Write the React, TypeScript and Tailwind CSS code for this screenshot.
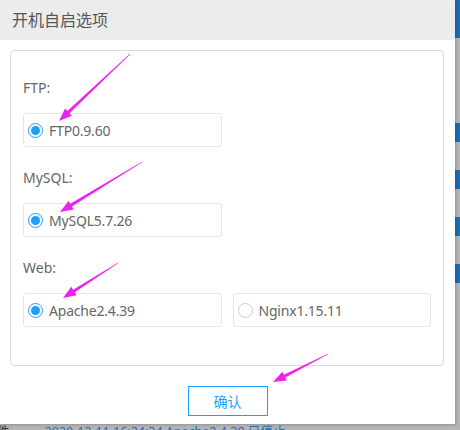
import { useState } from "react";

type Pt = [number, number];

// magenta annotation arrow, thin at the tail and widening into a head
function arrowPoints(tail: Pt, tip: Pt) {
  const dx = tip[0] - tail[0];
  const dy = tip[1] - tail[1];
  const len = Math.hypot(dx, dy);
  const ux = dx / len;
  const uy = dy / len;
  const nx = -uy;
  const ny = ux;
  const head = 13;
  const bx = tip[0] - ux * head;
  const by = tip[1] - uy * head;
  const pts: Pt[] = [
    [tail[0] + nx * 0.3, tail[1] + ny * 0.3],
    [bx + nx * 1.6, by + ny * 1.6],
    [bx + nx * 5, by + ny * 5],
    tip,
    [bx - nx * 5, by - ny * 5],
    [bx - nx * 1.6, by - ny * 1.6],
    [tail[0] - nx * 0.3, tail[1] - ny * 0.3],
  ];
  return pts.map((p) => p.join(",")).join(" ");
}

const arrows: [Pt, Pt][] = [
  [[130, 54], [59, 121]],
  [[142, 162], [60, 212]],
  [[118, 263], [63, 298]],
  [[328, 354], [273, 382]],
];

function Radio({ label, checked, onClick }: { label: string; checked: boolean; onClick: () => void }) {
  return (
    <button
      onClick={onClick}
      className="flex items-center w-[199px] h-[34px] border border-[#e6e6e6] rounded-[3px] pl-[4px] text-left bg-white"
    >
      <span
        className={
          checked
            ? "flex items-center justify-center w-[15px] h-[15px] rounded-full border border-[#1e9fff]"
            : "flex items-center justify-center w-[15px] h-[15px] rounded-full border border-[#c9c9c9]"
        }
      >
        {checked && <span className="w-[9px] h-[9px] rounded-full bg-[#1e9fff]" />}
      </span>
      <span className="ml-[6px] text-[14px] tracking-[-0.2px] text-[#666]">{label}</span>
    </button>
  );
}

export default function App() {
  const [ftp, setFtp] = useState(true);
  const [mysql, setMysql] = useState(true);
  const [web, setWeb] = useState("apache");

  return (
    <div
      className="relative w-[460px] h-[430px] bg-[#b5b5b5] overflow-hidden"
      style={{ fontFamily: '"Noto Sans", "Noto Sans CJK SC", sans-serif' }}
    >
      {/* page behind the dialog */}
      <div className="absolute right-0 top-0 w-[5px] h-full flex flex-col">
        <div className="h-[38px] bg-[#1b6fb3]" />
        <div className="mt-[85px] h-[19px] bg-[#1b6fb3]" />
        <div className="mt-[28px] h-[19px] bg-[#1b6fb3]" />
        <div className="mt-[28px] h-[19px] bg-[#1b6fb3]" />
        <div className="mt-[28px] h-[19px] bg-[#1b6fb3]" />
      </div>
      <div className="absolute left-0 bottom-0 w-full h-[6px] overflow-hidden flex text-[12.5px] leading-[16px]">
        <span className="text-[#333] -ml-[3px]">件</span>
        <span className="ml-[35px] text-[#2b6cb8]">2020-12-11 16:24:34 Apache2.4.39 已停止</span>
      </div>

      {/* dialog */}
      <div className="relative w-[455px] h-[424px] bg-white flex flex-col shadow-[1px_1px_3px_rgba(0,0,0,0.2)]">
        <div className="h-[40px] bg-[#ececec] flex items-center pl-[12px] text-[16px] text-[#555]">
          开机自启选项
        </div>
        <div className="mt-[10px] ml-[10px] w-[434px] h-[316px] border border-[#dcdcdc] rounded-[4px] pt-[26px] px-[12px] flex flex-col">
          <div className="h-[20px] flex items-center text-[14px] text-[#666]">FTP:</div>
          <div className="mt-[16px]">
            <Radio label="FTP0.9.60" checked={ftp} onClick={() => setFtp(!ftp)} />
          </div>
          <div className="mt-[20px] h-[20px] flex items-center text-[14px] text-[#666]">MySQL:</div>
          <div className="mt-[16px]">
            <Radio label="MySQL5.7.26" checked={mysql} onClick={() => setMysql(!mysql)} />
          </div>
          <div className="mt-[20px] h-[20px] flex items-center text-[14px] text-[#666]">Web:</div>
          <div className="mt-[16px] flex gap-[11px]">
            <Radio label="Apache2.4.39" checked={web === "apache"} onClick={() => setWeb("apache")} />
            <Radio label="Nginx1.15.11" checked={web === "nginx"} onClick={() => setWeb("nginx")} />
          </div>
        </div>
        <div className="mt-[20px] flex justify-center">
          <button className="w-[80px] h-[30px] border border-[#1e9fff] text-[#1e9fff] text-[14px] bg-white">
            确认
          </button>
        </div>
      </div>

      {/* annotation arrows */}
      <svg className="absolute left-0 top-0 pointer-events-none" width="460" height="430">
        {arrows.map(([a, b], i) => (
          <polygon key={i} points={arrowPoints(a, b)} fill="#ee22ee" />
        ))}
      </svg>
    </div>
  );
}
